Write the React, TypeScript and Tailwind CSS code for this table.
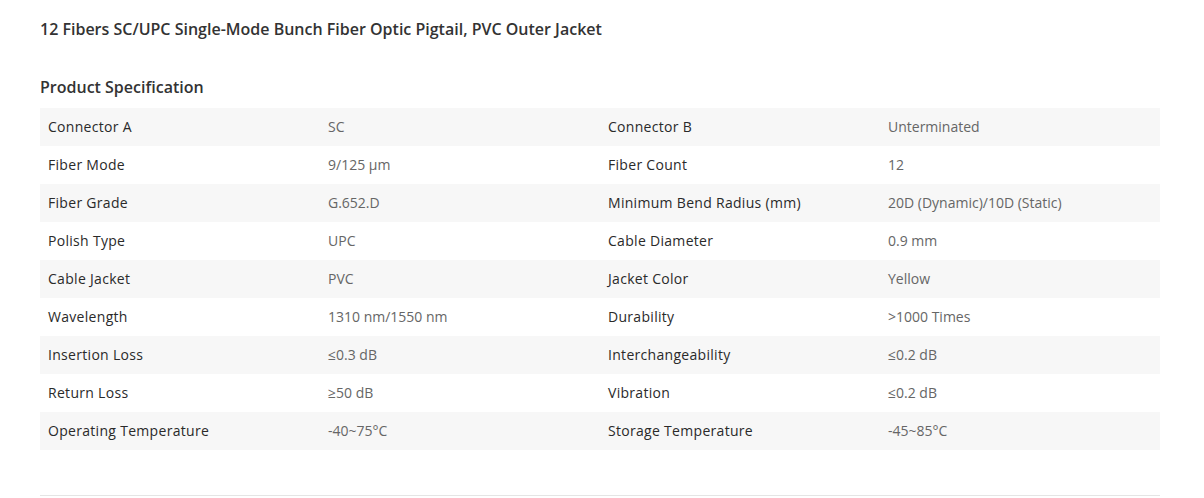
const rows: [string, string, string, string][] = [
  ["Connector A", "SC", "Connector B", "Unterminated"],
  ["Fiber Mode", "9/125 μm", "Fiber Count", "12"],
  ["Fiber Grade", "G.652.D", "Minimum Bend Radius (mm)", "20D (Dynamic)/10D (Static)"],
  ["Polish Type", "UPC", "Cable Diameter", "0.9 mm"],
  ["Cable Jacket", "PVC", "Jacket Color", "Yellow"],
  ["Wavelength", "1310 nm/1550 nm", "Durability", ">1000 Times"],
  ["Insertion Loss", "≤0.3 dB", "Interchangeability", "≤0.2 dB"],
  ["Return Loss", "≥50 dB", "Vibration", "≤0.2 dB"],
  ["Operating Temperature", "-40~75°C", "Storage Temperature", "-45~85°C"],
];

export default function App() {
  return (
    <div className="w-[1204px] h-[498px] bg-white overflow-hidden font-['Open_Sans',sans-serif] text-[#333]">
      <div className="w-[1120px] ml-10">
        <h1 className="pt-[17px] text-base leading-6 font-semibold">
          12 Fibers SC/UPC Single-Mode Bunch Fiber Optic Pigtail, PVC Outer Jacket
        </h1>
        <h2 className="mt-[34px] text-base leading-6 font-semibold">Product Specification</h2>
        <div className="mt-[9px] text-sm">
          {rows.map((r, i) => (
            <div key={i} className={`grid grid-cols-4 h-[38px] items-center ${i % 2 === 0 ? "bg-[#f7f7f7]" : ""}`}>
              <div className="pl-2 tracking-[0.3px] text-[#2a2a2a]">{r[0]}</div>
              <div className="pl-2 text-[#666]">{r[1]}</div>
              <div className="pl-2 tracking-[0.3px] text-[#2a2a2a]">{r[2]}</div>
              <div className="pl-2 text-[#666]">{r[3]}</div>
            </div>
          ))}
        </div>
        <div className="mt-[45px] border-t border-[#e5e5e5]" />
      </div>
    </div>
  );
}
